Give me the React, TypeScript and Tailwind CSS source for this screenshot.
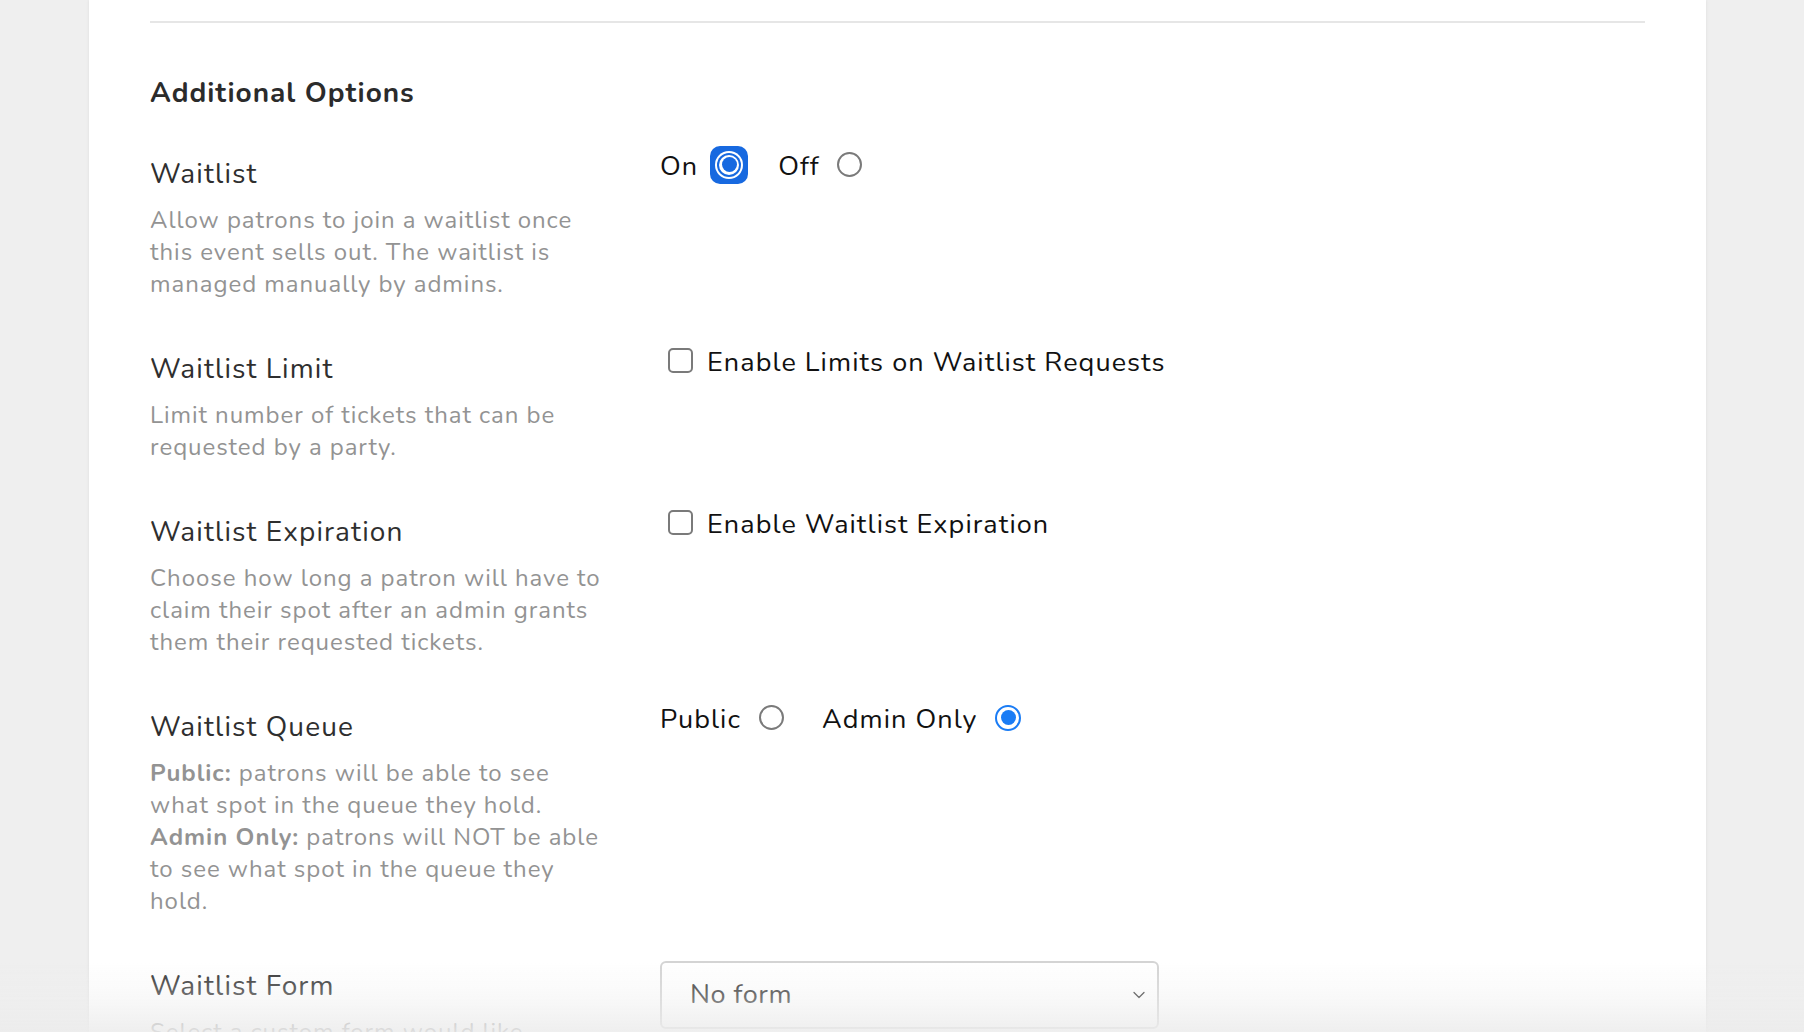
import { ChevronDown } from 'lucide-react';

function Radio({ checked, focused }: { checked?: boolean; focused?: boolean }) {
  if (focused) {
    return (
      <span className="flex h-[38px] w-[38px] items-center justify-center rounded-[10px] bg-[#1769e0]">
        <span className="flex h-[28px] w-[28px] items-center justify-center rounded-full bg-white">
          <span className="flex h-[24px] w-[24px] items-center justify-center rounded-full bg-[#1769e0]">
            <span className="flex h-[20px] w-[20px] items-center justify-center rounded-full bg-white">
              <span className="h-[15px] w-[15px] rounded-full bg-[#1769e0]" />
            </span>
          </span>
        </span>
      </span>
    );
  }
  if (checked) {
    return (
      <span className="flex h-[26px] w-[26px] items-center justify-center rounded-full border-[2.5px] border-[#1a7cf5] bg-white">
        <span className="h-[15px] w-[15px] rounded-full bg-[#1a7cf5]" />
      </span>
    );
  }
  return <span className="block h-[25px] w-[25px] rounded-full border-2 border-[#7a7a7a] bg-white" />;
}

function Checkbox() {
  return <span className="block h-[25px] w-[25px] rounded-[5px] border-2 border-[#7a7a7a] bg-white" />;
}

function Row({ label, children, control }: { label: string; children: React.ReactNode; control: React.ReactNode }) {
  return (
    <div className="grid grid-cols-[452px_1fr] gap-x-[58px]">
      <div>
        <h3 className="text-[28px] leading-[36px] tracking-[0.04em] text-[#2f2f2f]">{label}</h3>
        <p className="mt-[12px] text-[24px] leading-[32px] tracking-[0.04em] text-[#939393]">{children}</p>
      </div>
      <div>{control}</div>
    </div>
  );
}

export default function App() {
  return (
    <div className="relative min-h-screen bg-[#efefef] font-[Nunito,Lato,sans-serif]">
      <div className="ml-[89px] w-[1617px] bg-white px-[61px] pb-[120px] shadow-[0_0_3px_rgba(0,0,0,0.08)]">
        <div className="h-[21px]" />
        <div className="border-t-2 border-[#e6e6e6]" />

        <h2 className="mt-[52px] text-[28px] font-bold leading-[36px] tracking-[0.035em] text-[#2b2b2b]">Additional Options</h2>

        <div className="mt-[45px] flex flex-col gap-[51px]">
          <Row
            label="Waitlist"
            control={
              <div className="-mt-[7px] flex items-center text-[27px] leading-[36px] tracking-[0.04em] text-[#111]">
                <span>On</span>
                <span className="ml-[12px] -mt-[5px]"><Radio checked focused /></span>
                <span className="ml-[30px]">Off</span>
                <span className="ml-[17px] -mt-[5px]"><Radio /></span>
              </div>
            }
          >
            Allow patrons to join a waitlist once this event sells out. The waitlist is managed manually by admins.
          </Row>

          <Row
            label="Waitlist Limit"
            control={
              <label className="-mt-[6px] flex items-center gap-[14px] pl-[8px] text-[27px] leading-[36px] tracking-[0.04em] text-[#111]">
                <span className="-mt-[5px]"><Checkbox /></span>
                Enable Limits on Waitlist Requests
              </label>
            }
          >
            Limit number of tickets that can be requested by a party.
          </Row>

          <Row
            label="Waitlist Expiration"
            control={
              <label className="-mt-[7px] flex items-center gap-[14px] pl-[8px] text-[27px] leading-[36px] tracking-[0.04em] text-[#111]">
                <span className="-mt-[5px]"><Checkbox /></span>
                Enable Waitlist Expiration
              </label>
            }
          >
            Choose how long a patron will have to claim their spot after an admin grants them their requested tickets.
          </Row>

          <Row
            label="Waitlist Queue"
            control={
              <div className="-mt-[7px] flex items-center text-[27px] leading-[36px] tracking-[0.04em] text-[#111]">
                <span>Public</span>
                <span className="ml-[18px] -mt-[5px]"><Radio /></span>
                <span className="ml-[38px]">Admin Only</span>
                <span className="ml-[18px] -mt-[5px]"><Radio checked /></span>
              </div>
            }
          >
            <b className="font-bold">Public:</b> patrons will be able to see what spot in the queue they hold.
            <br />
            <b className="font-bold">Admin Only:</b> patrons will NOT be able to see what spot in the queue they hold.
          </Row>

          <Row
            label="Waitlist Form"
            control={
              <div className="-mt-[7px] flex h-[68px] w-[499px] items-center justify-between rounded-[6px] border-2 border-[#d4d4d4] bg-white pl-[28px] pr-[8px] text-[27px] tracking-[0.02em] text-[#333]">
                <span>No form</span>
                <ChevronDown size={20} strokeWidth={1.5} className="text-[#333]" />
              </div>
            }
          >
            Select a custom form would like patrons to complete when joining the waitlist.
          </Row>
        </div>
      </div>

      <div className="pointer-events-none fixed inset-x-0 bottom-0 h-[70px] bg-gradient-to-b from-[rgba(238,238,238,0)] via-[rgba(238,238,238,0.35)] to-[rgba(236,236,236,0.85)]" />
    </div>
  );
}
